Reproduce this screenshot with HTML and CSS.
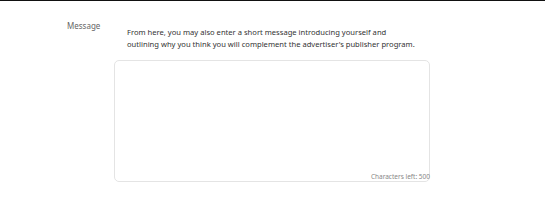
FILE: index.html
```html
<!DOCTYPE html>
<html>
	<head>
		<meta charset="UTF-8">
		<title>Message</title>
		<link rel="stylesheet" href="styles.css">
	</head>
	<body>
		<div class="row">
			<label class="label" for="msg">Message</label>
			<div class="field">
				<p class="hint">From here, you may also enter a short message introducing yourself and<br>outlining why you think you will complement the advertiser's publisher program.</p>
				<div class="box">
					<textarea id="msg" maxlength="500"></textarea>
					<span class="count">Characters left: 500</span>
				</div>
			</div>
		</div>
	</body>
</html>
```

FILE: styles.css
```css
*{
	margin: 0;
	padding: 0;
	box-sizing: border-box;
}
body{
	border-top: 1px solid #111;
	font-family: "Noto Sans", sans-serif;
	background: #fff;
}
.row{
	display: flex;
	padding: 19px 0 0 67px;
}
.label{
	width: 47px;
	font-size: 8px;
	color: #666;
	line-height: 12px;
}
.field{
	display: flex;
	flex-direction: column;
}
.hint{
	font-size: 7.6px;
	line-height: 12px;
	color: #333;
	padding: 6px 0 0 13px;
}
.box{
	position: relative;
	margin-top: 10px;
	width: 316px;
	height: 122px;
}
textarea{
	display: block;
	width: 100%;
	height: 100%;
	border: 1px solid #e4e4e4;
	border-radius: 5px;
	resize: none;
	outline: none;
}
.count{
	position: absolute;
	right: 0;
	bottom: 1px;
	font-size: 6.5px;
	color: #888;
}
```
